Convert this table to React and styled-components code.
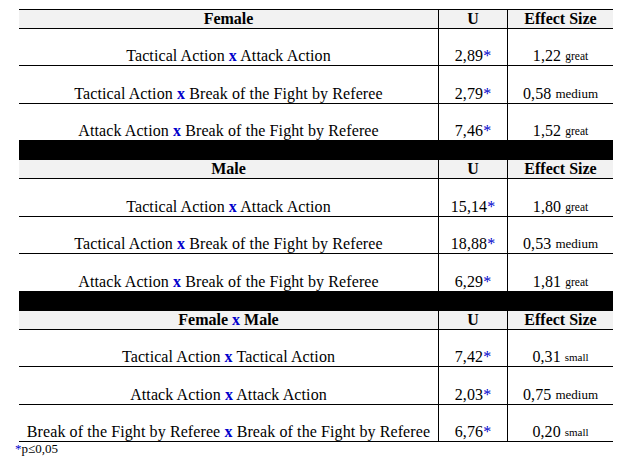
import React from "react";
import styled, { createGlobalStyle } from "styled-components";

const GlobalStyle = createGlobalStyle`
  body {
    margin: 0;
    background: #fff;
    color: #000;
  }
`;

const Page = styled.div`
  width: 620px;
  height: 466px;
  padding-top: 9px;
  box-sizing: border-box;
  font-family: "Liberation Serif", "Times New Roman", serif;
`;

const Table = styled.div`
  width: 594px;
  margin-left: 19px;
  border-top: 1px solid #000;
`;

const Row = styled.div`
  display: grid;
  grid-template-columns: 419px 69px 106px;
  height: ${(p) => p.$height}px;
  background: ${(p) => (p.$head ? "#f2f2f2" : "#fff")};
  border-bottom: ${(p) => (p.$last ? "none" : "1px solid #000")};
`;

const Cell = styled.div`
  display: flex;
  justify-content: center;
  align-items: ${(p) => (p.$head ? "center" : "flex-end")};
  box-sizing: border-box;
  border-left: ${(p) => (p.$sep ? "1px solid #000" : "none")};
  font-size: 16px;
  line-height: 18px;
  letter-spacing: ${(p) => (p.$head ? "0" : "0.1px")};
  font-weight: ${(p) => (p.$head ? 700 : 400)};
  white-space: nowrap;
`;

const Band = styled.div`
  height: 20px;
  background: #000;
`;

const Cross = styled.span`
  color: #0000cc;
  font-weight: 700;
`;

const Star = styled.span`
  color: #0000cc;
`;

const Label = styled.span`
  font-size: ${(p) => p.$size}px;
  letter-spacing: 0;
  margin-left: 4px;
`;

const Note = styled.div`
  padding-left: 15px;
  font-size: 13px;
  line-height: 14px;
`;

const labelSize = { great: 11.5, small: 11, medium: 13 };

const sections = [
  {
    title: ["Female"],
    heights: [36, 37, 36],
    rows: [
      ["Tactical Action", "Attack Action", "2,89", "1,22", "great"],
      ["Tactical Action", "Break of the Fight by Referee", "2,79", "0,58", "medium"],
      ["Attack Action", "Break of the Fight by Referee", "7,46", "1,52", "great"],
    ],
  },
  {
    title: ["Male"],
    heights: [37, 36, 37],
    rows: [
      ["Tactical Action", "Attack Action", "15,14", "1,80", "great"],
      ["Tactical Action", "Break of the Fight by Referee", "18,88", "0,53", "medium"],
      ["Attack Action", "Break of the Fight by Referee", "6,29", "1,81", "great"],
    ],
  },
  {
    title: ["Female", "Male"],
    heights: [36, 37, 36],
    rows: [
      ["Tactical Action", "Tactical Action", "7,42", "0,31", "small"],
      ["Attack Action", "Attack Action", "2,03", "0,75", "medium"],
      [
        "Break of the Fight by Referee",
        "Break of the Fight by Referee",
        "6,76",
        "0,20",
        "small",
      ],
    ],
  },
];

const Pair = ({ a, b }) => (
  <span>
    {a} <Cross>x</Cross> {b}
  </span>
);

const Section = ({ section, isLast }) => (
  <>
    <Row $head $height={18}>
      <Cell $head>
        {section.title.length > 1 ? (
          <Pair a={section.title[0]} b={section.title[1]} />
        ) : (
          section.title[0]
        )}
      </Cell>
      <Cell $head $sep>
        U
      </Cell>
      <Cell $head $sep>
        Effect Size
      </Cell>
    </Row>
    {section.rows.map((r, i) => (
      <Row
        key={i}
        $height={section.heights[i]}
        $last={i === section.rows.length - 1 && !isLast}
      >
        <Cell>
          <Pair a={r[0]} b={r[1]} />
        </Cell>
        <Cell $sep>
          {r[2]}
          <Star>*</Star>
        </Cell>
        <Cell $sep>
          {r[3]}
          <Label $size={labelSize[r[4]]}>{r[4]}</Label>
        </Cell>
      </Row>
    ))}
  </>
);

export default function App() {
  return (
    <Page>
      <GlobalStyle />
      <Table>
        {sections.map((s, i) => (
          <React.Fragment key={i}>
            {i > 0 && <Band />}
            <Section section={s} isLast={i === sections.length - 1} />
          </React.Fragment>
        ))}
      </Table>
      <Note>
        <Star>*</Star>p≤0,05
      </Note>
    </Page>
  );
}
